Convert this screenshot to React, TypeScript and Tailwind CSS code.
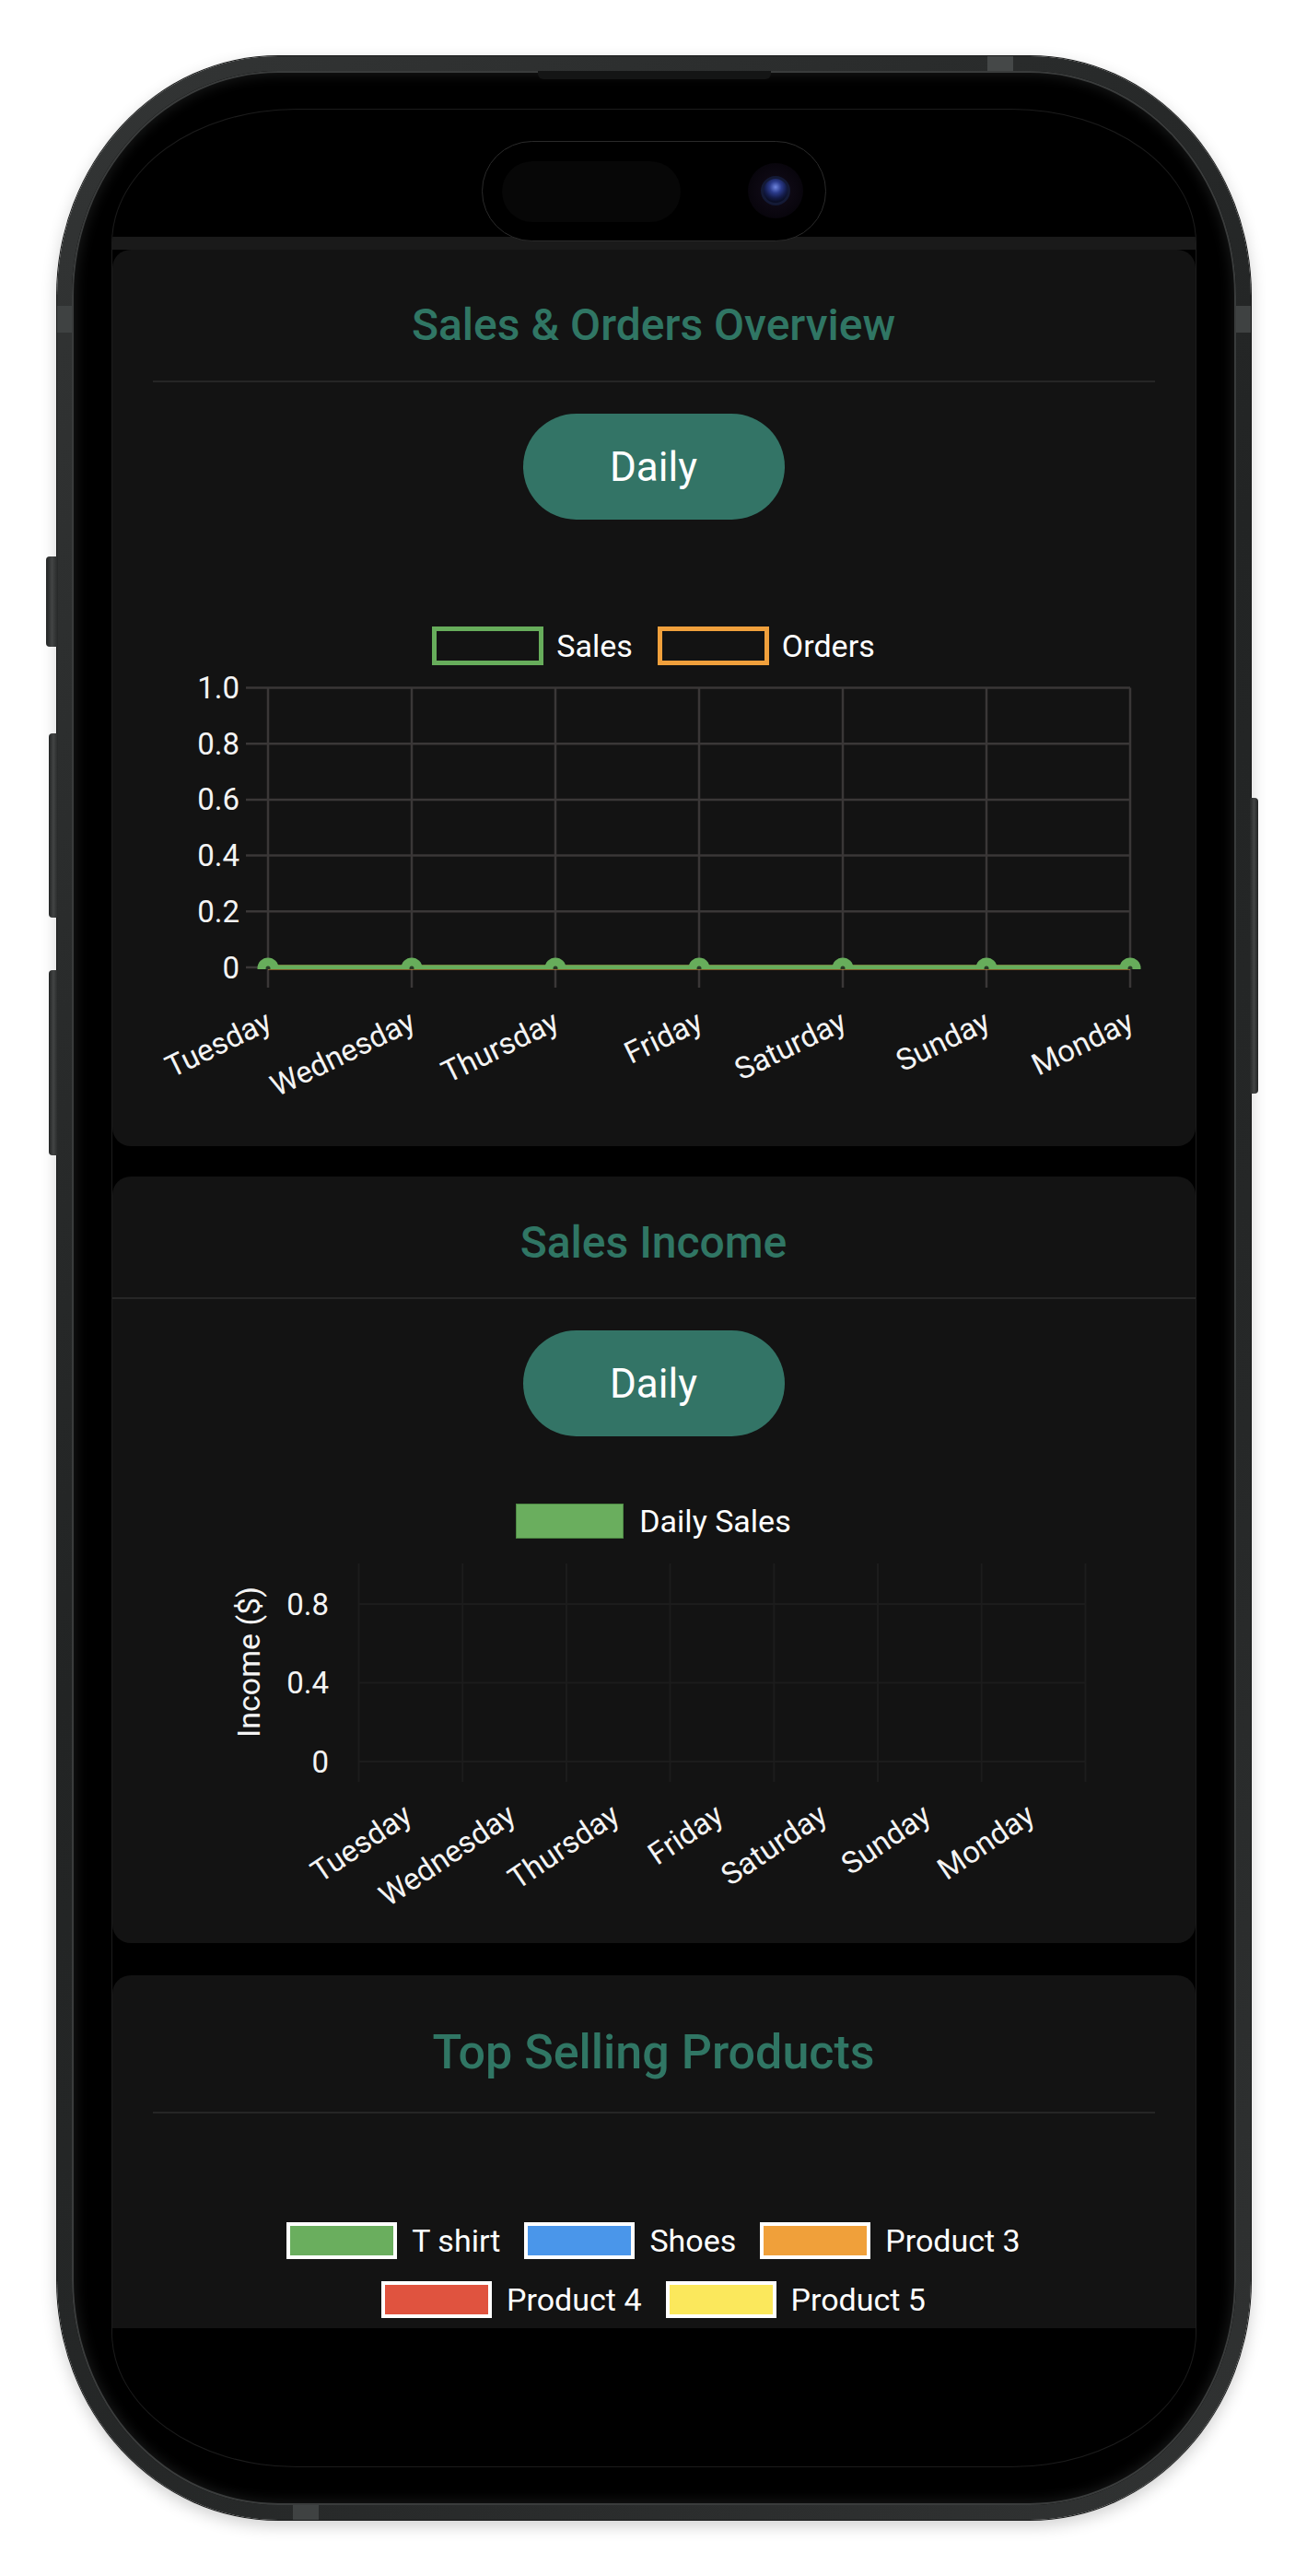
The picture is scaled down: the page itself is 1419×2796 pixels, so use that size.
import React from "react";

const days = ["Tuesday", "Wednesday", "Thursday", "Friday", "Saturday", "Sunday", "Monday"];
const FONT = "Roboto, 'Noto Sans', sans-serif";

function LineChart() {
  const xs = days.map((_, i) => 169 + i * 156);
  const ys = [24.5, 85.2, 145.9, 206.6, 267.3, 328];
  const labels = ["1.0", "0.8", "0.6", "0.4", "0.2", "0"];
  return (
    <svg width={1176} height={522} className="block shrink-0">
      <defs>
        <clipPath id="area1">
          <rect x={0} y={0} width={1176} height={330} />
        </clipPath>
      </defs>
      {ys.map((y, i) => (
        <line key={"h" + i} x1={145} x2={1105} y1={y} y2={y} stroke="#3a3737" strokeWidth={2.5} />
      ))}
      {xs.map((x, i) => (
        <line key={"v" + i} x1={x} x2={x} y1={24.5} y2={350} stroke="#3a3737" strokeWidth={2.5} />
      ))}
      {ys.map((y, i) => (
        <text
          key={"yl" + i}
          x={138}
          y={y}
          textAnchor="end"
          dominantBaseline="central"
          fill="#f4f4f4"
          fontFamily={FONT}
          fontSize={33}
        >
          {labels[i]}
        </text>
      ))}
      <line x1={169} x2={1105} y1={328} y2={328} stroke="#f0a03c" strokeWidth={5} />
      <g clipPath="url(#area1)">
        <line x1={169} x2={1105} y1={328} y2={328} stroke="#67ad5b" strokeWidth={5} />
        {xs.map((x, i) => (
          <g key={"p" + i}>
            <circle cx={x} cy={329} r={11.5} fill="#67ad5b" />
            <circle cx={x} cy={329} r={2.5} fill="#2a3a26" />
          </g>
        ))}
      </g>
      {xs.map((x, i) => (
        <text
          key={"xl" + i}
          x={x + 1}
          y={384}
          textAnchor="end"
          dominantBaseline="central"
          fill="#f4f4f4"
          fontFamily={FONT}
          fontSize={33}
          transform={`rotate(-26 ${x + 1} 384)`}
        >
          {days[i]}
        </text>
      ))}
    </svg>
  );
}

function BarChart() {
  const grid = Array.from({ length: 8 }, (_, i) => 267.5 + i * 112.7);
  const centers = days.map((_, i) => 267.5 + 56.35 + i * 112.7);
  const ys = [71, 156.5, 242];
  const labels = ["0.8", "0.4", "0"];
  return (
    <svg width={1176} height={439} className="block shrink-0">
      {grid.map((x, i) => (
        <line key={"v" + i} x1={x} x2={x} y1={27} y2={264} stroke="#1c1c1c" strokeWidth={2} />
      ))}
      {ys.map((y, i) => (
        <line key={"h" + i} x1={267.5} x2={1056.4} y1={y} y2={y} stroke="#1c1c1c" strokeWidth={2} />
      ))}
      {ys.map((y, i) => (
        <text
          key={"yl" + i}
          x={235}
          y={y}
          textAnchor="end"
          dominantBaseline="central"
          fill="#f4f4f4"
          fontFamily={FONT}
          fontSize={33}
        >
          {labels[i]}
        </text>
      ))}
      <text
        x={147.5}
        y={134}
        textAnchor="middle"
        dominantBaseline="central"
        fill="#f4f4f4"
        fontFamily={FONT}
        fontSize={34}
        transform="rotate(-90 147.5 134)"
      >
        Income ($)
      </text>
      {centers.map((x, i) => (
        <text
          key={"xl" + i}
          x={x - 3}
          y={296}
          textAnchor="end"
          dominantBaseline="central"
          fill="#f4f4f4"
          fontFamily={FONT}
          fontSize={33}
          transform={`rotate(-34 ${x - 3} 296)`}
        >
          {days[i]}
        </text>
      ))}
    </svg>
  );
}

function DailyButton() {
  return (
    <div className="mx-auto flex h-[115px] w-[284px] shrink-0 items-center justify-center rounded-full bg-[#337466] text-[44px] leading-none text-white">
      Daily
    </div>
  );
}

function ProductLegend({ color, label }: { color: string; label: string }) {
  return (
    <div className="flex items-center gap-[16px]">
      <div className={`h-[40px] w-[120px] border-[4px] border-white ${color}`} />
      <span className="text-[34px] leading-none text-white">{label}</span>
    </div>
  );
}

export default function App() {
  return (
    <div className="flex h-[2796px] w-[1419px] items-center justify-center bg-white font-['Roboto',sans-serif]">
      <div className="relative h-[2674px] w-[1296px] rounded-[240px/260px] bg-[linear-gradient(135deg,#333535,#222424_45%,#262828_70%,#313333)] p-[16px] shadow-[0_0_0_1px_#161717,0_6px_18px_rgba(0,0,0,0.2)]">
        {/* side buttons */}
        <div className="absolute left-[-12px] top-[543px] h-[98px] w-[13px] rounded-l-[4px] bg-[linear-gradient(90deg,#222424,#424444_50%,#262828)]" />
        <div className="absolute left-[-9px] top-[735px] h-[200px] w-[10px] rounded-l-[4px] bg-[linear-gradient(90deg,#222424,#424444_50%,#262828)]" />
        <div className="absolute left-[-9px] top-[992px] h-[201px] w-[10px] rounded-l-[4px] bg-[linear-gradient(90deg,#222424,#424444_50%,#262828)]" />
        <div className="absolute right-[-8px] top-[805px] h-[321px] w-[9px] rounded-r-[4px] bg-[linear-gradient(90deg,#262828,#424444_50%,#222424)]" />
        {/* antenna marks */}
        <div className="absolute left-[1010px] top-0 h-[16px] w-[28px] bg-[#454848]" />
        <div className="absolute left-0 top-[271px] h-[29px] w-[16px] bg-[#3f4242]" />
        <div className="absolute right-0 top-[271px] h-[29px] w-[16px] bg-[#3f4242]" />
        <div className="absolute bottom-0 left-[256px] h-[16px] w-[28px] bg-[#3f4242]" />
        {/* speaker */}
        <div className="absolute left-[522px] top-[16px] z-10 h-[9px] w-[253px] rounded-b-[6px] bg-[#141515]" />

        <div className="h-full w-full rounded-[224px/244px] bg-black px-[44px] py-[42px] shadow-[inset_0_0_0_2px_#3a3c3c,inset_0_0_14px_4px_#181919]">
          <div className="relative flex h-full w-full flex-col overflow-hidden rounded-[200px/145px] bg-black shadow-[0_0_0_1px_#1c1c1c]">
            {/* dynamic island */}
            <div className="absolute left-[401px] top-[34px] z-20 h-[109px] w-[374px] rounded-full border border-[#2a2a2a] bg-black">
              <div className="absolute left-[21px] top-[21px] h-[66px] w-[194px] rounded-full bg-[#070707]" />
              <div className="absolute left-[288px] top-[23px] flex h-[60px] w-[60px] items-center justify-center rounded-full bg-[radial-gradient(circle,#140d1c,#08050c_70%,#050307)]">
                <div className="h-[32px] w-[32px] rounded-full border-[3px] border-[#141a36] bg-[radial-gradient(circle_at_50%_35%,#6f86e0,#2a3a8a_30%,#141c4a_55%,#0a0e24_75%)]" />
              </div>
            </div>

            <div className="h-[138px] shrink-0" />

            <div className="flex h-[2270px] shrink-0 flex-col overflow-hidden">
              <div className="h-[14px] shrink-0 bg-[#1a1a1a]" />

              {/* Card 1 */}
              <div className="flex h-[973px] shrink-0 flex-col overflow-hidden rounded-[20px] bg-[#131313]">
                <div className="h-[58px] shrink-0" />
                <div className="h-[48px] shrink-0 text-center text-[48px] font-medium leading-none text-[#307664]">
                  Sales &amp; Orders Overview
                </div>
                <div className="mx-[44px] mt-[36px] h-[2px] shrink-0 bg-[#262626]" />
                <div className="mt-[34px]">
                  <DailyButton />
                </div>
                <div className="mt-[116px] flex h-[42px] shrink-0 items-center justify-center gap-[27px]">
                  <div className="flex items-center gap-[14px]">
                    <div className="h-[42px] w-[121px] border-[5px] border-[#67ad5b]" />
                    <span className="text-[34px] leading-none text-white">Sales</span>
                  </div>
                  <div className="flex items-center gap-[14px]">
                    <div className="h-[42px] w-[121px] border-[5px] border-[#f0a03c]" />
                    <span className="text-[34px] leading-none text-white">Orders</span>
                  </div>
                </div>
                <LineChart />
              </div>

              {/* Card 2 */}
              <div className="mt-[33px] flex h-[832px] shrink-0 flex-col overflow-hidden rounded-[20px] bg-[#131313]">
                <div className="h-[48px] shrink-0" />
                <div className="h-[48px] shrink-0 text-center text-[48px] font-medium leading-none text-[#307664]">
                  Sales Income
                </div>
                <div className="mt-[35px] h-[2px] shrink-0 bg-[#262626]" />
                <div className="mt-[34px]">
                  <DailyButton />
                </div>
                <div className="mt-[73px] flex h-[38px] shrink-0 items-center justify-center gap-[17px]">
                  <div className="h-[38px] w-[117px] border border-[#4e8a44] bg-[#6aae5e]" />
                  <span className="text-[34px] leading-none text-white">Daily Sales</span>
                </div>
                <BarChart />
              </div>

              {/* Card 3 */}
              <div className="mt-[35px] flex flex-1 flex-col rounded-t-[20px] bg-[#131313]">
                <div className="h-[58px] shrink-0" />
                <div className="h-[52px] shrink-0 text-center text-[52px] font-medium leading-none text-[#307664]">
                  Top Selling Products
                </div>
                <div className="mx-[44px] mt-[38px] h-[2px] shrink-0 bg-[#262626]" />
                <div className="mt-[118px] flex h-[40px] shrink-0 items-center justify-center gap-[26px]">
                  <ProductLegend color="bg-[#6aae5e]" label="T shirt" />
                  <ProductLegend color="bg-[#4a96ea]" label="Shoes" />
                  <ProductLegend color="bg-[#f0a03a]" label="Product 3" />
                </div>
                <div className="mt-[24px] flex h-[40px] shrink-0 items-center justify-center gap-[26px]">
                  <ProductLegend color="bg-[#e0533f]" label="Product 4" />
                  <ProductLegend color="bg-[#fbe85c]" label="Product 5" />
                </div>
              </div>
            </div>
          </div>
        </div>
      </div>
    </div>
  );
}
